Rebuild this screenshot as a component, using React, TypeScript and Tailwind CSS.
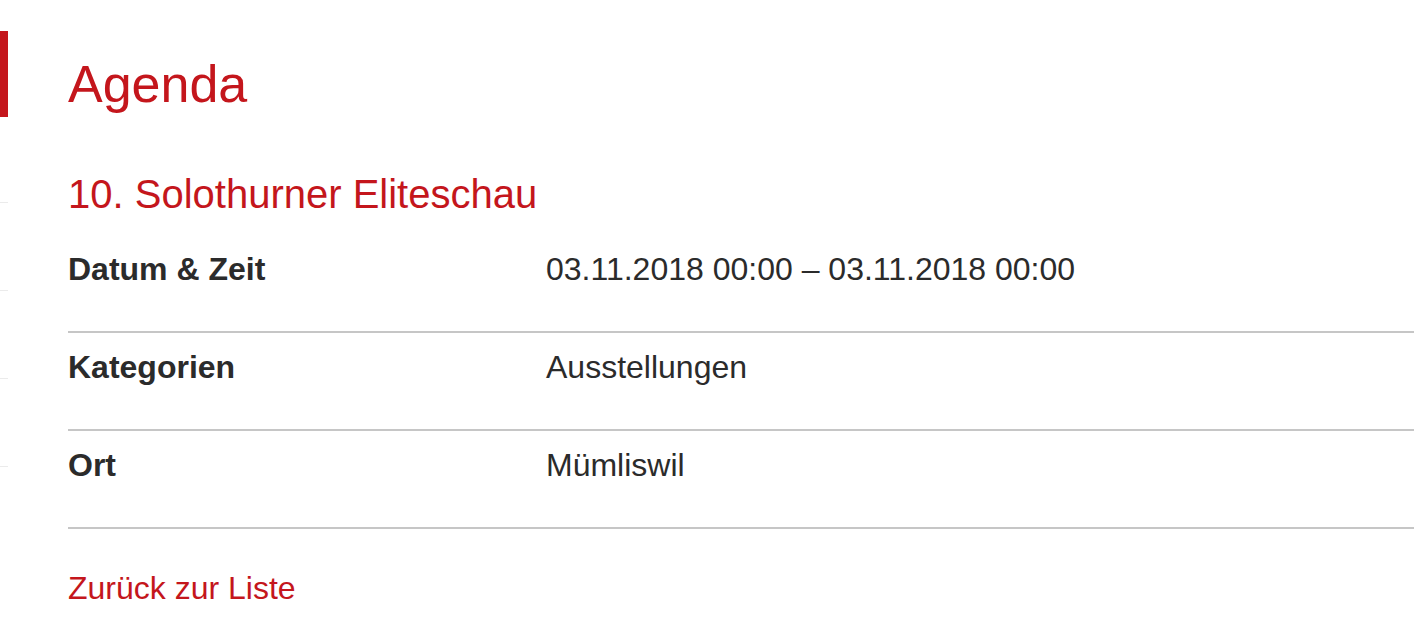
const rows = [
  { label: 'Datum & Zeit', value: '03.11.2018 00:00 – 03.11.2018 00:00' },
  { label: 'Kategorien', value: 'Ausstellungen' },
  { label: 'Ort', value: 'Mümliswil' },
];

export default function App() {
  return (
    <div className="flex min-h-[636px] bg-white font-['Liberation_Sans',Arial,sans-serif] text-[#2b2b2b] overflow-hidden">
      {/* Sidebar edge (nav cut off at the left) */}
      <aside className="w-[8px] shrink-0 flex flex-col pt-[31px]">
        <div className="h-[86px] bg-[#c4161c]" />
        <div className="h-[86px] border-b border-[#ebebeb]" />
        <div className="h-[88px] border-b border-[#ebebeb]" />
        <div className="h-[88px] border-b border-[#ebebeb]" />
        <div className="h-[88px] border-b border-[#ebebeb]" />
      </aside>

      <main className="flex-1 ml-[60px] pt-[58px]">
        <h1 className="text-[52px] leading-none text-[#c4161c]">Agenda</h1>

        <h2 className="mt-[64px] text-[40px] leading-none text-[#c4161c]">10. Solothurner Eliteschau</h2>

        <div className="mt-[21px]">
          {rows.map((row) => (
            <div key={row.label} className="flex pt-[18px] pb-[46px] border-b-2 border-[#c6c6c6] text-[32px] leading-none">
              <div className="w-[478px] shrink-0 font-bold">{row.label}</div>
              <div>{row.value}</div>
            </div>
          ))}
        </div>

        <a href="#" className="block mt-[43px] text-[32px] leading-none text-[#c4161c]">
          Zurück zur Liste
        </a>
      </main>
    </div>
  );
}
